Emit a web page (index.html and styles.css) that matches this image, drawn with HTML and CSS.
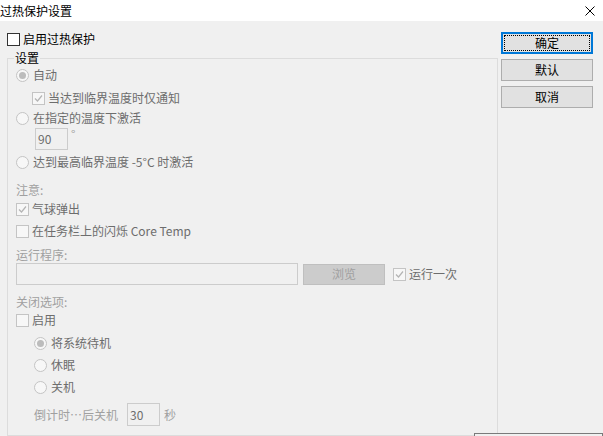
FILE: index.html
```html
<!DOCTYPE html>
<html lang="zh-CN">
<head>
    <meta charset="UTF-8">
    <title>过热保护设置</title>
    <link rel="stylesheet" href="styles.css">
</head>
<body>
    <div class="titlebar">
        <span class="title">过热保护设置</span>
        <svg class="close" viewBox="0 0 10 10"><path d="M0.5 0.5L9.5 9.5M9.5 0.5L0.5 9.5" stroke="#000" stroke-width="1"/></svg>
    </div>

    <div class="dialog">
        <div class="main">
            <label class="row enable"><span class="box active"></span>启用过热保护</label>

            <fieldset class="group">
                <legend>设置</legend>
                <div class="row opt mt2"><span class="radio on"></span>自动</div>
                <div class="row opt sub mt7"><span class="box"><svg viewBox="0 0 11 11"><path d="M2 5.5L4.5 8L9 2.5" fill="none" stroke="#b4b4b4" stroke-width="1.2"/></svg></span>当达到临界温度时仅通知</div>
                <div class="row opt mt4"><span class="radio"></span>在指定的温度下激活</div>
                <div class="field-row temp mt2"><span class="input">90</span><span class="deg">°</span></div>
                <div class="row opt mt4"><span class="radio"></span>达到最高临界温度 -5°C 时激活</div>

                <div class="caption mt12">注意:</div>
                <div class="row opt mt3"><span class="box"><svg viewBox="0 0 11 11"><path d="M2 5.5L4.5 8L9 2.5" fill="none" stroke="#b4b4b4" stroke-width="1.2"/></svg></span>气球弹出</div>
                <div class="row opt mt6"><span class="box"></span>在任务栏上的闪烁 Core Temp</div>

                <div class="caption mt8">运行程序:</div>
                <div class="field-row program">
                    <span class="input path"></span>
                    <span class="browse">浏览</span>
                    <span class="row opt once"><span class="box"><svg viewBox="0 0 11 11"><path d="M2 5.5L4.5 8L9 2.5" fill="none" stroke="#b4b4b4" stroke-width="1.2"/></svg></span>运行一次</span>
                </div>

                <div class="caption mt9">关闭选项:</div>
                <div class="row opt mt2"><span class="box"></span>启用</div>
                <div class="row opt sub2 mt7"><span class="radio on"></span>将系统待机</div>
                <div class="row opt sub2 mt6"><span class="radio"></span>休眠</div>
                <div class="row opt sub2 mt6"><span class="radio"></span>关机</div>
                <div class="field-row countdown mt8">
                    <span class="caption">倒计时…后关机</span>
                    <span class="input">30</span>
                    <span class="caption">秒</span>
                </div>
            </fieldset>
        </div>

        <div class="actions">
            <button class="btn focused">确定</button>
            <button class="btn">默认</button>
            <button class="btn">取消</button>
        </div>
    </div>

    <div class="popup"></div>
</body>
</html>
```

FILE: styles.css
```css
* { margin: 0; padding: 0; box-sizing: border-box; }
body { width: 603px; height: 436px; overflow: hidden; position: relative; background: #f0f0f0; font-family: "Noto Sans CJK SC", "Microsoft YaHei", sans-serif; font-size: 12px; line-height: 16px; color: #000; }

.titlebar { height: 21px; background: #fff; display: flex; align-items: center; justify-content: space-between; }
.title { line-height: 21px; }
.close { width: 10px; height: 10px; margin-right: 8px; }

.dialog { display: flex; }
.main { width: 497px; padding-top: 10px; }

.row { display: flex; align-items: center; height: 16px; white-space: nowrap; }
.enable { padding-left: 7px; }
.opt { color: #6d6d6d; }
.sub { padding-left: 16px; }
.sub2 { padding-left: 18px; }

.box { width: 13px; height: 13px; border: 1px solid #c4c4c4; background: #f7f7f7; margin-right: 3px; display: flex; align-items: center; justify-content: center; flex: none; }
.box svg { width: 11px; height: 11px; }
.box.active { border-color: #333; background: #fff; }
.radio { width: 13px; height: 13px; border: 1px solid #c4c4c4; border-radius: 50%; background: #f7f7f7; margin-right: 4px; display: flex; align-items: center; justify-content: center; flex: none; }
.radio.on::after { content: ""; width: 7px; height: 7px; border-radius: 50%; background: #bcbcbc; }

.group { margin: 4px 0 0 7px; width: 491px; border: 1px solid #dcdcdc; padding: 0 8px 9px; }
.group legend { line-height: 14px; padding: 0 1px; margin-left: -2px; }

.caption { height: 16px; color: #a0a0a0; white-space: nowrap; }
.field-row { display: flex; align-items: center; }
.input { display: flex; align-items: center; height: 22px; width: 33px; border: 1px solid #cccccc; background: #f0f0f0; color: #6d6d6d; padding-left: 2px; }
.temp { padding-left: 19px; align-items: flex-start; }
.deg { color: #a0a0a0; margin-left: 3px; line-height: 12px; }
.program .path { width: 282px; }
.browse { width: 82px; height: 21px; margin-left: 5px; background: #cccccc; border: 1px solid #bfbfbf; color: #a0a0a0; display: flex; align-items: center; justify-content: center; }
.once { margin-left: 8px; }
.countdown { padding-left: 18px; height: 23px; }
.countdown .caption { color: #a0a0a0; }
.countdown .input { height: 23px; margin: 0 4px 0 9px; }

.mt2 { margin-top: 2px; }
.mt3 { margin-top: 3px; }
.mt4 { margin-top: 4px; }
.mt6 { margin-top: 6px; }
.mt7 { margin-top: 7px; }
.mt8 { margin-top: 8px; }
.mt9 { margin-top: 9px; }
.mt12 { margin-top: 12px; }

.actions { margin-left: 4px; padding-top: 11px; display: flex; flex-direction: column; gap: 5px; }
.btn { width: 92px; height: 22px; border: 1px solid #adadad; background: #e1e1e1; font: inherit; color: #000; position: relative; }
.btn.focused { border: 2px solid #0078d7; }
.btn.focused::after { content: ""; position: absolute; inset: 1px; border: 1px dotted #000; }

.popup { position: absolute; left: 474px; top: 433px; width: 129px; height: 12px; border: 1px solid #7a7a7a; background: #f0f0f0; }
```
